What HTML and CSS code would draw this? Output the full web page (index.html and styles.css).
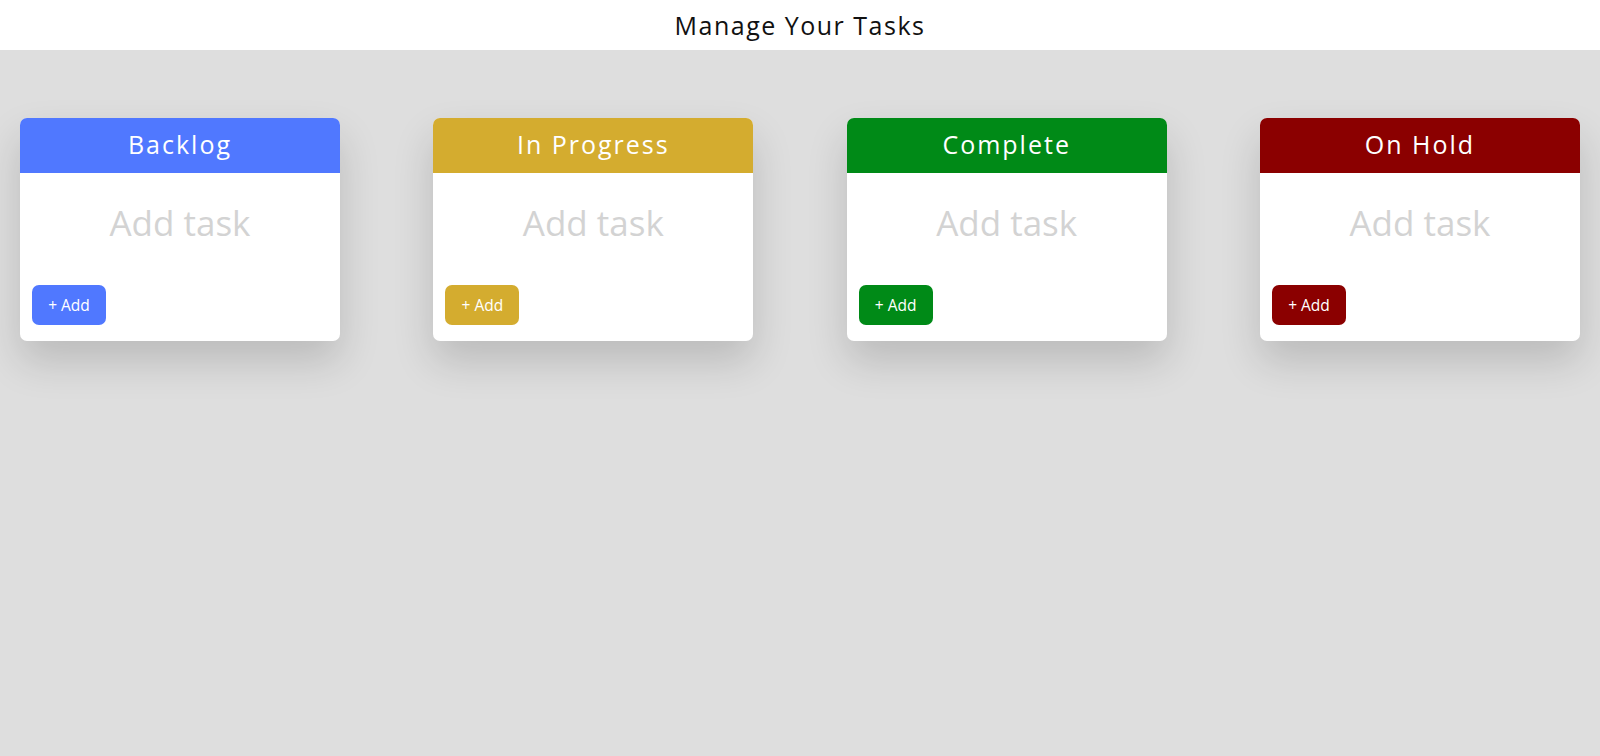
FILE: index.html
```html
<!DOCTYPE html>
<html lang="en">
<head>
<meta charset="utf-8">
<title>Manage Your Tasks</title>
<link rel="stylesheet" href="styles.css">
</head>
<body>
<header class="topbar"><h1 class="title">Manage Your Tasks</h1></header>
<main class="board">
  <section class="column col-backlog">
    <div class="col-head">Backlog</div>
    <div class="col-body">
      <div class="add-task">Add task</div>
      <button class="add-btn">+ Add</button>
    </div>
  </section>
  <section class="column col-progress">
    <div class="col-head">In Progress</div>
    <div class="col-body">
      <div class="add-task">Add task</div>
      <button class="add-btn">+ Add</button>
    </div>
  </section>
  <section class="column col-complete">
    <div class="col-head">Complete</div>
    <div class="col-body">
      <div class="add-task">Add task</div>
      <button class="add-btn">+ Add</button>
    </div>
  </section>
  <section class="column col-hold">
    <div class="col-head">On Hold</div>
    <div class="col-body">
      <div class="add-task">Add task</div>
      <button class="add-btn">+ Add</button>
    </div>
  </section>
</main>
</body>
</html>
```
FILE: styles.css
```css
* { box-sizing: border-box; }
html, body { margin: 0; padding: 0; }
body {
  background: #dedede;
  font-family: "Open Sans", "Noto Sans", sans-serif;
  min-height: 756px;
}
.topbar {
  height: 50px;
  background: #fff;
  display: flex;
  align-items: center;
  justify-content: center;
}
.title {
  margin: 0;
  font-size: 25px;
  font-weight: 400;
  letter-spacing: 1.5px;
  color: #111;
}
.board {
  display: flex;
  justify-content: space-between;
  align-items: flex-start;
  padding: 68px 20px 0;
}
.column {
  width: 320px;
  background: #fff;
  border-radius: 7px;
  box-shadow: 0 20px 40px rgba(0, 0, 0, 0.16);
  overflow: hidden;
}
.col-head {
  height: 55px;
  display: flex;
  align-items: center;
  justify-content: center;
  padding-bottom: 4px;
  color: #fff;
  font-size: 25px;
  letter-spacing: 2px;
}
.col-body {
  display: flex;
  flex-direction: column;
  align-items: flex-start;
  padding: 23px 12px 16px;
}
.add-task {
  align-self: stretch;
  text-align: center;
  font-size: 35px;
  line-height: 54px;
  color: #d3d3d3;
  margin-bottom: 35px;
}
.add-btn {
  height: 40px;
  width: 74px;
  border: none;
  border-radius: 7px;
  color: #fff;
  font-family: inherit;
  font-size: 15.5px;
  padding: 0;
}
.col-backlog .col-head, .col-backlog .add-btn { background: #5078ff; }
.col-progress .col-head, .col-progress .add-btn { background: #d4ac2f; }
.col-complete .col-head, .col-complete .add-btn { background: #008a17; }
.col-hold .col-head, .col-hold .add-btn { background: #8b0000; }
```
